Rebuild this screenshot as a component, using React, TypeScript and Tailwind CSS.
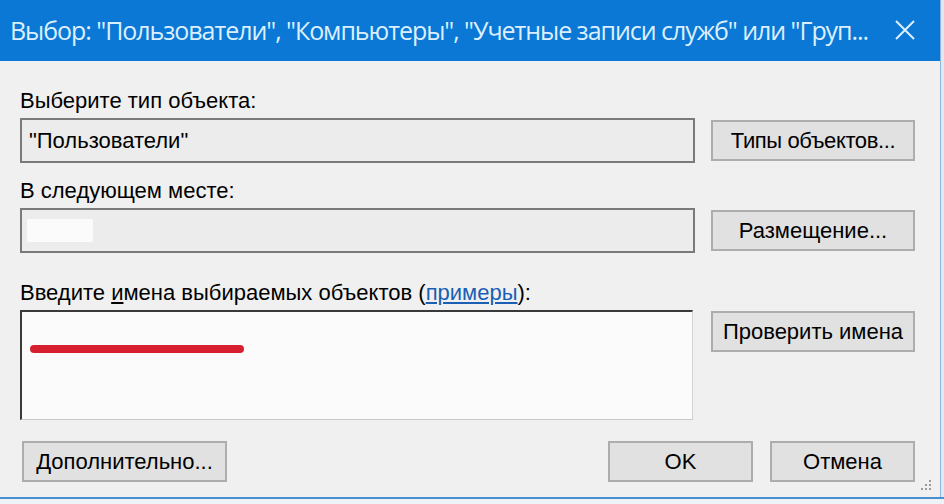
import React from "react";

const Btn = ({ label, className = "" }: { label: string; className?: string }) => (
  <div
    className={`flex items-center justify-center h-[41px] bg-[#e1e1e1] border-2 border-[#adadad] text-[22px] text-black ${className}`}
  >
    {label}
  </div>
);

export default function App() {
  return (
    <div
      className="w-[944px] h-[504px] overflow-hidden bg-[#dfe9f3] flex flex-col"
      style={{ fontFamily: '"Liberation Sans", Arial, sans-serif' }}
    >
      <div className="flex w-[941px] flex-col border-r border-[#8fb4d8]">
        {/* title bar */}
        <div className="flex h-[61px] items-center justify-between bg-[#0a78d4] pl-[10px] pr-[24px]">
          <span
            className="text-[25px] text-[#dcefff] tracking-[-1.05px] whitespace-nowrap"
            style={{ fontFamily: '"Open Sans", "Noto Sans", sans-serif' }}
          >
            Выбор: "Пользователи", "Компьютеры", "Учетные записи служб" или "Груп...
          </span>
          <svg width="22" height="22" viewBox="0 0 22 22" className="mt-[-2px]">
            <path d="M2 2 L20 20 M20 2 L2 20" stroke="#dcefff" strokeWidth="2" />
          </svg>
        </div>

        {/* body */}
        <div className="relative flex h-[436px] flex-col bg-[#f0f0f0] pl-[20px] pr-[25px] pt-[27px]">
          <div className="h-[26px] text-[22px] leading-[26px] text-black">Выберите тип объекта:</div>
          <div className="mt-[4px] flex items-center gap-[16px]">
            <div className="flex h-[45px] flex-1 items-center border-2 border-[#7a7a7a] bg-[#ececec] pl-[7px] text-[22px] text-black">
              "Пользователи"
            </div>
            <Btn label="Типы объектов..." className="w-[204px] tracking-[-0.4px]" />
          </div>

          <div className="mt-[15px] h-[26px] text-[22px] leading-[26px] text-black">В следующем месте:</div>
          <div className="mt-[4px] flex items-center gap-[16px]">
            <div className="flex h-[45px] flex-1 items-center border-2 border-[#7a7a7a] bg-[#ececec] pl-[5px]">
              <div className="h-[23px] w-[66px] rounded-[2px] bg-[#fbfbfb]" />
            </div>
            <Btn label="Размещение..." className="w-[204px]" />
          </div>

          <div className="mt-[27px] h-[26px] text-[22px] leading-[26px] text-black">
            Введите <span className="underline underline-offset-2">и</span>мена выбираемых объектов (
            <span className="text-[#1a5fb4] underline underline-offset-2">примеры</span>):
          </div>
          <div className="mt-[4px] flex items-start gap-[18px]">
            <div className="flex h-[110px] flex-1 items-start border-t-2 border-l-2 border-r border-b border-t-[#3a3a3a] border-l-[#3a3a3a] border-r-[#d4d4d4] border-b-[#c8c8c8] bg-[#fbfbfb] pl-[8px] pt-[33px]">
              <div className="h-[8px] w-[214px] rounded-full bg-[#d6202f]" />
            </div>
            <Btn label="Проверить имена" className="mt-[1px] w-[204px]" />
          </div>

          <div className="mt-[21px] flex items-center">
            <Btn label="Дополнительно..." className="ml-[2px] w-[205px]" />
            <div className="flex-1" />
            <Btn label="OK" className="w-[145px]" />
            <Btn label="Отмена" className="ml-[17px] w-[145px]" />
          </div>

          {/* resize grip */}
          <svg width="12" height="12" viewBox="0 0 12 12" className="absolute bottom-[6px] right-[8px]">
            {[
              [10, 2],
              [10, 6],
              [6, 6],
              [10, 10],
              [6, 10],
              [2, 10],
            ].map(([x, y], i) => (
              <rect key={i} x={x - 1} y={y - 1} width="2" height="2" fill="#9a9a9a" />
            ))}
          </svg>
        </div>
      </div>
      <div className="h-[2px] w-full bg-[#4a8fd0]" />
      <div className="flex-1 bg-[#eef3f8]" />
    </div>
  );
}
